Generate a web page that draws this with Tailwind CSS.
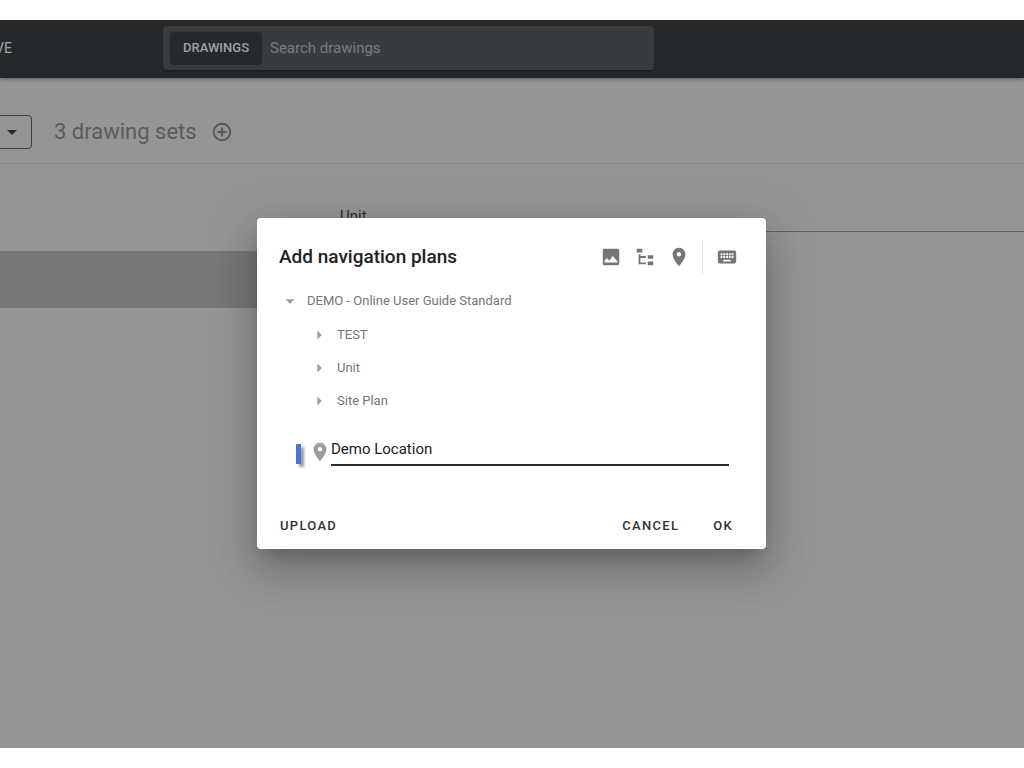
<!DOCTYPE html>
<html lang="en">
<head>
    <meta charset="UTF-8">
    <meta name="viewport" content="width=device-width, initial-scale=1.0">
    <title>Add navigation plans</title>
    <script src="https://cdn.jsdelivr.net/npm/@tailwindcss/browser@4"></script>
</head>
<body class="min-h-screen flex flex-col bg-white py-5 font-['Roboto',sans-serif]">
    <div class="relative flex-1 flex flex-col bg-[#959595] overflow-hidden">
        <!-- Top bar -->
        <header class="flex items-center h-[58px] pb-0.5 bg-[#25292c] shadow-[0_1px_4px_rgba(0,0,0,0.4)]">
            <nav class="w-[163px] shrink-0">
                <a href="#" class="-ml-[5px] text-sm text-[#a3a5a6]">VE</a>
            </nav>
            <div class="flex items-center w-[491px] h-11 p-[7px] rounded-sm bg-[#393c3f] shadow-[0_1px_2px_rgba(0,0,0,0.4)]">
                <button type="button" class="h-[33px] w-[92px] rounded-sm bg-[#25292c] text-[13px] font-medium text-[#a0a2a3]">DRAWINGS</button>
                <input type="text" aria-label="Search drawings" placeholder="Search drawings" class="flex-1 min-w-0 h-[33px] px-2 text-[15px] text-[#a0a2a3] placeholder:text-[#7b7d7f] outline-none">
            </div>
        </header>

        <!-- Drawing set toolbar -->
        <div class="flex items-center h-[86px] pt-[22px] border-b border-[#878787]">
            <div class="relative -ml-10 w-[72px]">
                <select aria-label="Drawing set" class="block appearance-none w-full h-[34px] rounded-sm border border-[#3a3e40] pl-3 text-sm text-[#858585]">
                    <option></option>
                </select>
                <svg class="absolute right-2 top-[5px] w-6 h-6 pointer-events-none" viewBox="0 0 24 24" fill="#25292c"><path d="M7 10l5 5 5-5z"/></svg>
            </div>
            <h1 class="ml-[22px] text-[22px] text-[#5b5b5b]">3 drawing sets</h1>
            <button type="button" aria-label="Add drawing set" class="ml-3.5">
                <svg class="w-[22px] h-[22px]" viewBox="0 0 24 24" fill="#555555"><path d="M13 7h-2v4H7v2h4v4h2v-4h4v-2h-4V7zm-1-5C6.480 2 2 6.480 2 12s4.480 10 10 10 10-4.480 10-10S17.520 2 12 2zm0 18c-4.410 0-8-3.590-8-8s3.590-8 8-8 8 3.590 8 8-3.590 8-8 8z"/></svg>
            </button>
        </div>

        <main class="flex flex-1">
            <div class="w-[300px] pt-[87px]">
                <div class="h-[57px] bg-[#777777]"></div>
            </div>
            <div class="flex-1 pl-10 pt-10">
                <input type="text" aria-label="Name" value="Unit" class="block w-full h-7 pb-1 border-b border-[#626262] text-[15px] text-[#2b2b2b] outline-none">
            </div>
        </main>

        <!-- Dialog -->
        <div class="absolute inset-0 flex items-center justify-center pr-px pb-px">
            <div role="dialog" aria-labelledby="dialogTitle" class="w-[509px] rounded-sm bg-white shadow-[0_11px_15px_-7px_rgba(0,0,0,0.2),0_24px_38px_3px_rgba(0,0,0,0.14),0_9px_46px_8px_rgba(0,0,0,0.12)]">
                <div class="flex items-center pt-[22px] pl-[22px] pr-7">
                    <h2 id="dialogTitle" class="flex-1 text-[19px] font-medium text-[#212121]">Add navigation plans</h2>
                    <div class="flex items-center gap-3">
                        <button type="button" aria-label="Image">
                            <svg class="block w-[22px] h-[22px]" viewBox="0 0 24 24" fill="#757575"><path d="M21 19V5c0-1.100-.9-2-2-2H5c-1.100 0-2 .9-2 2v14c0 1.100.9 2 2 2h14c1.100 0 2-.9 2-2zM5 18v-2l2.500-3 2.500 3 4-5 5 6v1z"/></svg>
                        </button>
                        <button type="button" aria-label="Tree">
                            <svg class="block w-[22px] h-[22px]" viewBox="0 0 24 24" fill="#757575"><path d="M3 3h6v4H3zM15 10h6v4h-6zM15 17h6v4h-6zM5 9h2v2h6v2H7v5h6v2H5z"/></svg>
                        </button>
                        <button type="button" aria-label="Location">
                            <svg class="block w-[22px] h-[22px]" viewBox="0 0 24 24" fill="#757575"><path d="M12 2C8.130 2 5 5.130 5 9c0 5.250 7 13 7 13s7-7.750 7-13c0-3.870-3.130-7-7-7zm0 9.500c-1.380 0-2.500-1.120-2.500-2.500s1.120-2.500 2.500-2.500 2.500 1.120 2.500 2.500-1.120 2.500-2.500 2.500z"/></svg>
                        </button>
                        <div class="w-px h-[34px] mr-px bg-[#e4e4e4]"></div>
                        <button type="button" aria-label="Keyboard">
                            <svg class="block w-[22px] h-[22px]" viewBox="0 0 24 24" fill="#757575"><path d="M20 5H4c-1.100 0-1.990.9-1.990 2L2 17c0 1.100.9 2 2 2h16c1.100 0 2-.9 2-2V7c0-1.100-.9-2-2-2zm-9 3h2v2h-2V8zm0 3h2v2h-2v-2zM8 8h2v2H8V8zm0 3h2v2H8v-2zm-1 2H5v-2h2v2zm0-3H5V8h2v2zm9 7H8v-2h8v2zm0-4h-2v-2h2v2zm0-3h-2V8h2v2zm3 3h-2v-2h2v2zm0-3h-2V8h2v2z"/></svg>
                        </button>
                    </div>
                </div>

                <ul class="pt-2.5 pl-[22px] text-[13px] text-[#757575]">
                    <li class="flex items-center h-[33px]">
                        <svg class="w-[22px] h-[22px] mr-1.5" viewBox="0 0 24 24" fill="#9e9e9e"><path d="M7 10l5 5 5-5z"/></svg>
                        DEMO - Online User Guide Standard
                    </li>
                    <li>
                        <ul class="pt-px pl-[30px]">
                            <li class="flex items-center h-[33px]">
                                <svg class="w-[22px] h-[22px] mr-1.5" viewBox="0 0 24 24" fill="#9e9e9e"><path d="M9 17l5-5-5-5v10z"/></svg>
                                TEST
                            </li>
                            <li class="flex items-center h-[33px]">
                                <svg class="w-[22px] h-[22px] mr-1.5" viewBox="0 0 24 24" fill="#9e9e9e"><path d="M9 17l5-5-5-5v10z"/></svg>
                                Unit
                            </li>
                            <li class="flex items-center h-[33px]">
                                <svg class="w-[22px] h-[22px] mr-1.5" viewBox="0 0 24 24" fill="#9e9e9e"><path d="M9 17l5-5-5-5v10z"/></svg>
                                Site Plan
                            </li>
                        </ul>
                    </li>
                </ul>

                <div class="flex items-center pt-[19px] pl-[39px] pr-[37px]">
                    <div class="w-[5px] h-5 mt-1.5 bg-[#4a74d9] shadow-[3px_3px_3px_rgba(0,0,0,0.4)]"></div>
                    <svg class="w-[22px] h-[22px] mt-px ml-2" viewBox="0 0 24 24" fill="#9e9e9e"><path d="M12 2C8.130 2 5 5.130 5 9c0 5.250 7 13 7 13s7-7.750 7-13c0-3.870-3.130-7-7-7zm0 9.500c-1.380 0-2.500-1.120-2.500-2.500s1.120-2.500 2.500-2.500 2.500 1.120 2.500 2.500-1.120 2.500-2.500 2.500z"/></svg>
                    <input type="text" aria-label="Location name" value="Demo Location" class="flex-1 min-w-0 h-[30px] pb-0.5 border-b-2 border-[#2b2b2b] text-[15px] text-[#212121] outline-none">
                </div>

                <div class="flex items-center pt-11 pb-[7px] px-[23px] text-[13px] font-medium text-[#2f3437] tracking-widest">
                    <button type="button" class="h-8">UPLOAD</button>
                    <button type="button" class="h-8 ml-auto">CANCEL</button>
                    <button type="button" class="h-8 ml-[34px] mr-2.5">OK</button>
                </div>
            </div>
        </div>
    </div>
</body>
</html>
